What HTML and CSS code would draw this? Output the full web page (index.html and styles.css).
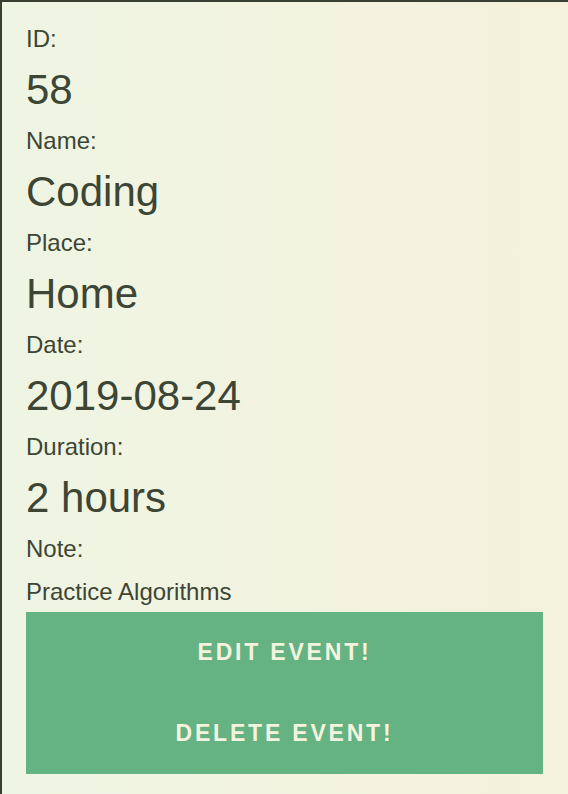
FILE: index.html
```html
<!DOCTYPE html>
<html lang="en">
<head>
<meta charset="utf-8">
<title>Event</title>
<link rel="stylesheet" href="styles.css">
</head>
<body>
<div class="card">
  <div class="label">ID:</div>
  <div class="value">58</div>
  <div class="label">Name:</div>
  <div class="value">Coding</div>
  <div class="label">Place:</div>
  <div class="value">Home</div>
  <div class="label">Date:</div>
  <div class="value">2019-08-24</div>
  <div class="label">Duration:</div>
  <div class="value">2 hours</div>
  <div class="label">Note:</div>
  <div class="note">Practice Algorithms</div>
  <div class="actions">
    <button class="btn" type="button">Edit Event!</button>
    <button class="btn" type="button">Delete Event!</button>
  </div>
</div>
</body>
</html>
```

FILE: styles.css
```css
html, body {
  margin: 0;
  padding: 0;
  height: 100%;
}
body {
  background: linear-gradient(to right, #eff5e3, #f4f1dc);
  font-family: "Liberation Sans", Arial, Helvetica, sans-serif;
  color: #3d4535;
}
.card {
  box-sizing: border-box;
  min-height: 100%;
  border-top: 2px solid #3a4031;
  border-left: 2px solid #3a4031;
  padding: 14px 25px 0 24px;
}
.label {
  font-size: 24px;
  line-height: 46px;
}
.value {
  font-size: 42px;
  line-height: 56px;
}
.note {
  font-size: 24px;
  line-height: 40px;
}
.actions {
  display: flex;
  flex-direction: column;
  background: #65b283;
}
.btn {
  display: block;
  width: 100%;
  height: 81px;
  margin: 0;
  padding: 0;
  border: 0;
  background: #65b283;
  color: #f3f3df;
  font-family: "Liberation Sans", Arial, Helvetica, sans-serif;
  font-weight: bold;
  font-size: 23px;
  letter-spacing: 2.8px;
  text-transform: uppercase;
  text-align: center;
  cursor: pointer;
}
```
